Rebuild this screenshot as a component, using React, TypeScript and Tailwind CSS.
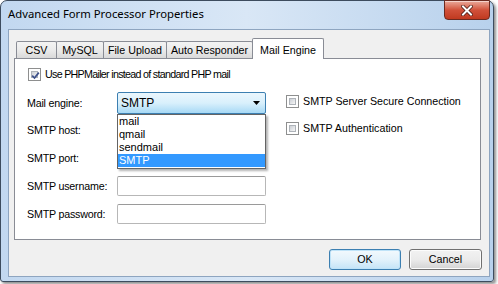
import React from "react";

const ui = { fontFamily: '"Liberation Sans", Arial, sans-serif' };
const title = { fontFamily: '"Noto Sans", "Open Sans", sans-serif' };

function CheckBox({ checked }: { checked?: boolean }) {
  return (
    <div className="w-[13px] h-[13px] border border-[#8e8f8f] bg-white p-[2px] shrink-0">
      <div className="w-full h-full bg-gradient-to-br from-[#cbcfd5] to-[#f6f6f6] border border-[#aeb3b9] relative">
        {checked && (
          <svg viewBox="0 0 9 9" className="absolute -left-[1px] -top-[1px] w-[9px] h-[9px]">
            <path d="M1.2 4.6 L3.5 7 L7.8 1.6" fill="none" stroke="#3b4f8a" strokeWidth="1.7" />
          </svg>
        )}
      </div>
    </div>
  );
}

function TextBox() {
  return <div className="w-[149px] h-[20px] rounded-[2px] border border-[#b7b7b7] border-t-[#9a9a9a] bg-white" />;
}

const tabs = [
  { label: "CSV", w: "w-[41px]" },
  { label: "MySQL", w: "w-[48px]" },
  { label: "File Upload", w: "w-[64px]" },
  { label: "Auto Responder", w: "w-[87px]" },
];

export default function App() {
  return (
    <div className="w-[498px] h-[284px] bg-white relative overflow-hidden" style={ui}>
      <div className="w-[494px] h-[282px] rounded-t-[7px] rounded-b-[3px] border border-[#3d4c5e] bg-gradient-to-r from-[#c2d8f0] via-[#d9e7f6] to-[#b8d1ec] shadow-[2px_2px_3px_rgba(0,0,0,0.45)] flex flex-col">
        {/* title bar */}
        <div className="h-[28px] flex items-start relative">
          <span className="pl-[7px] pt-[4px] text-[11.3px] text-black leading-[18px]" style={title}>
            Advanced Form Processor Properties
          </span>
          <div className="absolute right-[3px] top-[-1px] w-[46px] h-[20px] rounded-b-[4px] border border-[#6b2a20] bg-gradient-to-b from-[#e9a99b] via-[#d1513a] to-[#c0391f] flex items-center justify-center shadow-[inset_0_1px_0_rgba(255,255,255,0.5)]">
            <svg viewBox="0 0 12 11" className="w-[12px] h-[11px]">
              <path d="M2 1.5 L10 9.5 M10 1.5 L2 9.5" stroke="#4a1a12" strokeWidth="3.6" strokeLinecap="square" />
              <path d="M2 1.5 L10 9.5 M10 1.5 L2 9.5" stroke="#ffffff" strokeWidth="2" strokeLinecap="square" />
            </svg>
          </div>
        </div>

        {/* client area */}
        <div className="ml-[7px] w-[482px] h-[248px] border border-[#8ea5c0] bg-[#f0f0f0] px-[5px] pt-[7px] flex flex-col">
          {/* tabs */}
          <div className="flex items-end h-[21px] pl-[2px] relative z-10 text-[10.7px] text-black">
            {tabs.map((t) => (
              <div
                key={t.label}
                className={`${t.w} h-[17px] -mr-[1px] border border-[#898c95] border-b-0 rounded-t-[2px] bg-gradient-to-b from-[#f3f3f3] via-[#ebebeb] to-[#d9d9d9] flex items-center justify-center`}
              >
                {t.label}
              </div>
            ))}
            <div className="w-[72px] h-[21px] -mb-[1px] border border-[#898c95] border-b-0 rounded-t-[2px] bg-white flex items-start justify-center pt-[3px]">
              Mail Engine
            </div>
          </div>

          {/* panel */}
          <div className="w-[467px] h-[182px] border border-[#898c95] bg-white pl-[12px] pt-[9px] text-[10.7px] text-black">
            <div className="flex items-center gap-[4px] ml-[1px] h-[13px]">
              <CheckBox checked />
              <span className="tracking-[-0.7px]">Use PHPMailer instead of standard PHP mail</span>
            </div>

            <div className="flex mt-[11px]">
              <div className="flex flex-col gap-[8px]">
                <div className="flex items-center h-[22px] -mb-[2px]">
                  <span className="w-[90px] tracking-[-0.2px]">Mail engine:</span>
                  <div className="relative">
                    <div className="w-[149px] h-[22px] rounded-[2px] border border-[#3c7fb1] bg-gradient-to-b from-[#eaf6fd] via-[#d9f0fc] to-[#a7d9f5] flex items-center justify-between pl-[3px] pr-[5px] text-[12px]">
                      <span>SMTP</span>
                      <svg viewBox="0 0 7 4" className="w-[7px] h-[4px]">
                        <path d="M0 0 H7 L3.5 4 Z" fill="#000" />
                      </svg>
                    </div>
                    {/* open dropdown list */}
                    <div className="absolute left-0 top-[22px] w-[149px] border border-[#646464] bg-white z-20 shadow-[2px_2px_2px_rgba(0,0,0,0.3)] pb-[1px] text-[11px] leading-[13px]">
                      <div className="px-[1px]">mail</div>
                      <div className="px-[1px]">qmail</div>
                      <div className="px-[1px]">sendmail</div>
                      <div className="px-[1px] bg-[#3399ff] text-white">SMTP</div>
                    </div>
                  </div>
                </div>
                {["SMTP host:", "SMTP port:", "SMTP username:", "SMTP password:"].map((l) => (
                  <div key={l} className="flex items-center h-[20px]">
                    <span className="w-[90px] tracking-[-0.2px]">{l}</span>
                    <TextBox />
                  </div>
                ))}
              </div>

              <div className="ml-[20px] pt-[3px] flex flex-col gap-[14px]">
                <div className="flex items-center gap-[4px] h-[13px]">
                  <CheckBox />
                  <span>SMTP Server Secure Connection</span>
                </div>
                <div className="flex items-center gap-[4px] h-[13px]">
                  <CheckBox />
                  <span>SMTP Authentication</span>
                </div>
              </div>
            </div>
          </div>

          {/* buttons */}
          <div className="flex justify-end gap-[8px] mt-[9px] pr-[2px] text-[10.7px] text-black">
            <div className="w-[72px] h-[21px] rounded-[3px] border border-[#3c7fb1] bg-gradient-to-b from-[#f2f9fd] via-[#e3f2fb] to-[#c4e4f7] shadow-[inset_0_0_0_1px_#bfe3f8] flex items-center justify-center">
              OK
            </div>
            <div className="w-[73px] h-[21px] rounded-[3px] border border-[#707070] bg-gradient-to-b from-[#f2f2f2] via-[#ebebeb] to-[#d3d3d3] shadow-[inset_0_0_0_1px_#fcfcfc] flex items-center justify-center">
              Cancel
            </div>
          </div>
        </div>
      </div>
    </div>
  );
}
